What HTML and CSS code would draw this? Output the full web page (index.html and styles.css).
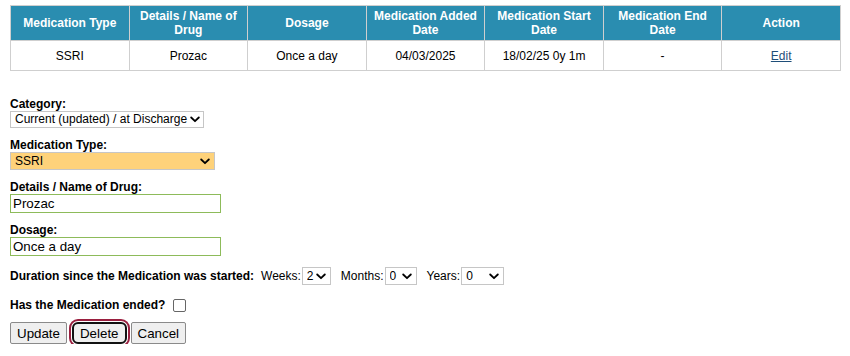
FILE: index.html
```html
<!DOCTYPE html>
<html>
<head>
<meta charset="utf-8">
<link rel="stylesheet" href="styles.css">
</head>
<body>
<table class="med-table">
  <thead>
    <tr>
      <th>Medication Type</th>
      <th>Details / Name of Drug</th>
      <th>Dosage</th>
      <th>Medication Added Date</th>
      <th>Medication Start Date</th>
      <th>Medication End Date</th>
      <th>Action</th>
    </tr>
  </thead>
  <tbody>
    <tr>
      <td>SSRI</td>
      <td>Prozac</td>
      <td>Once a day</td>
      <td>04/03/2025</td>
      <td>18/02/25 0y 1m</td>
      <td>-</td>
      <td><a href="#" class="edit-link">Edit</a></td>
    </tr>
  </tbody>
</table>

<form class="med-form">
  <div class="field">
    <label class="lbl">Category:</label>
    <select class="sel sel-cat"><option>Current (updated) / at Discharge</option></select>
  </div>
  <div class="field">
    <label class="lbl">Medication Type:</label>
    <select class="sel sel-type"><option>SSRI</option></select>
  </div>
  <div class="field">
    <label class="lbl">Details / Name of Drug:</label>
    <input class="txt" type="text" value="Prozac">
  </div>
  <div class="field">
    <label class="lbl">Dosage:</label>
    <input class="txt" type="text" value="Once a day">
  </div>
  <div class="duration">
    <span class="lbl-inline">Duration since the Medication was started:</span>
    <span class="dur-item">Weeks:<select class="sel sel-small sel-w"><option>2</option></select></span>
    <span class="dur-item">Months:<select class="sel sel-small sel-m"><option>0</option></select></span>
    <span class="dur-item">Years:<select class="sel sel-small sel-y"><option>0</option></select></span>
  </div>
  <div class="ended">
    <span class="lbl-inline">Has the Medication ended?</span>
    <span class="chk"></span>
  </div>
  <div class="buttons">
    <button type="button" class="btn">Update</button>
    <button type="button" class="btn btn-focus">Delete</button>
    <button type="button" class="btn">Cancel</button>
  </div>
</form>
</body>
</html>
```

FILE: styles.css
```css
html, body {
  margin: 0;
  padding: 0;
  background: #fff;
}
body {
  padding: 5px 0 0 10px;
  font-family: "Liberation Sans", Arial, sans-serif;
  font-size: 12px;
  color: #000;
}
.med-table {
  width: 831px;
  border-collapse: collapse;
  table-layout: fixed;
}
.med-table th,
.med-table td {
  border: 1px solid #cfcfcf;
  text-align: center;
  vertical-align: middle;
}
.med-table th {
  background: #2a8db0;
  color: #fff;
  font-weight: bold;
  font-size: 12px;
  line-height: 14px;
  height: 34px;
  padding: 0 3px;
}
.med-table td {
  height: 29px;
  padding: 0 3px;
  font-size: 12px;
}
.edit-link {
  color: #1f4e79;
  text-decoration: underline;
}
.med-form {
  margin-top: 26px;
}
.field {
  margin-bottom: 10px;
}
.lbl {
  display: block;
  font-weight: bold;
  font-size: 12px;
  line-height: 14px;
}
.lbl-inline {
  font-weight: bold;
  font-size: 12px;
}
.sel {
  -webkit-appearance: none;
  appearance: none;
  font-family: "Liberation Sans", Arial, sans-serif;
  font-size: 12px;
  color: #000;
  height: 17px;
  line-height: 15px;
  padding: 0 18px 0 4px;
  border: 1px solid #c6c6c6;
  border-radius: 0;
  background: #fff url("data:image/svg+xml;utf8,<svg xmlns='http://www.w3.org/2000/svg' width='10' height='7' viewBox='0 0 10 7'><path d='M1.2 1.5 L5 5.2 L8.8 1.5' fill='none' stroke='black' stroke-width='1.8' stroke-linecap='round' stroke-linejoin='round'/></svg>") no-repeat right 4px center;
  margin: 0;
  display: block;
}
.sel-cat {
  width: 194px;
  padding: 0 13px 0 4px;
  background-position: right 3px center;
}
.sel-type {
  width: 205px;
  height: 18px;
  background-color: #fed27a;
}
.txt {
  display: block;
  width: 211px;
  height: 19px;
  box-sizing: border-box;
  border: 1px solid #8dbb5a;
  font-family: "Liberation Sans", Arial, sans-serif;
  font-size: 13.33px;
  padding: 0 2px;
  margin: 0;
  color: #000;
}
.duration {
  display: flex;
  align-items: center;
  height: 20px;
  margin-top: 7px;
}
.duration .lbl-inline {
  margin-right: 7px;
}
.dur-item {
  display: flex;
  align-items: center;
  font-size: 12px;
  margin-right: 10px;
}
.sel-small {
  display: inline-block;
  margin-left: 1px;
  height: 18px;
}
.sel-w { width: 29px; padding-right: 14px; }
.sel-m { width: 32px; }
.sel-y { width: 43px; }
.ended {
  display: flex;
  align-items: center;
  margin-top: 12px;
  height: 14px;
}
.chk {
  display: inline-block;
  width: 11px;
  height: 11px;
  border: 1px solid #666;
  border-radius: 2px;
  margin-left: 8px;
  background: #fff;
}
.buttons {
  display: flex;
  align-items: center;
  margin-top: 10px;
}
.btn {
  font-family: "Liberation Sans", Arial, sans-serif;
  font-size: 13.33px;
  height: 22px;
  padding: 0 6px;
  background: #efefef;
  border: 1px solid #8a8a8a;
  border-radius: 2px;
  color: #000;
  margin: 0 3px 0 0;
}
.btn-focus {
  border: 2px solid #111;
  border-radius: 6px;
  box-shadow: 0 0 0 1px #fff, 0 0 0 3px #9a1f3f;
  margin: 0 4px 0 2px;
  padding: 0 6px;
}
```
